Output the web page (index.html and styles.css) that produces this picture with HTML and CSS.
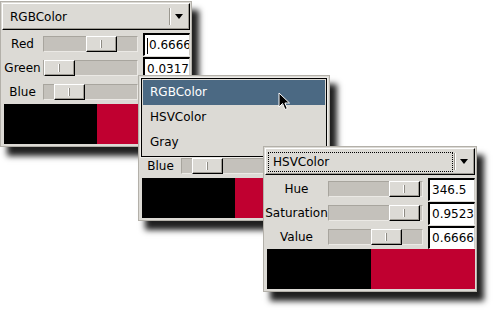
FILE: index.html
```html
<!DOCTYPE html>
<html lang="en">
<head>
    <meta charset="UTF-8">
    <title>Color Chooser</title>
    <link rel="stylesheet" href="styles.css">
</head>
<body>
    <div class="desk">
        <!-- RGB chooser, back -->
        <section class="win win-rgb">
            <div class="combo">
                <span class="combo-text">RGBColor</span>
                <span class="combo-btn"><i class="arrow"></i></span>
            </div>
            <div class="rows">
                <span class="label">Red</span>
                <div class="trough"><span class="thumb" style="left: 42px"></span></div>
                <div class="field"><span class="caret"></span>0.6666</div>

                <span class="label">Green</span>
                <div class="trough"><span class="thumb" style="left: 0px"></span></div>
                <div class="field">0.0317</div>

                <span class="label">Blue</span>
                <div class="trough"><span class="thumb" style="left: 10px"></span></div>
                <div class="field covered">0.1712</div>
            </div>
            <div class="swatch"><span class="swatch-old"></span><span class="swatch-new"></span></div>
        </section>

        <!-- same chooser with its mode menu open -->
        <section class="win win-menu">
            <div class="combo covered">
                <span class="combo-text">RGBColor</span>
                <span class="combo-btn"><i class="arrow"></i></span>
            </div>
            <div class="rows">
                <span class="label covered">Red</span>
                <div class="trough covered"><span class="thumb" style="left: 42px"></span></div>
                <div class="field covered">0.6666</div>

                <span class="label covered">Green</span>
                <div class="trough covered"><span class="thumb" style="left: 0px"></span></div>
                <div class="field covered">0.0317</div>

                <span class="label">Blue</span>
                <div class="trough"><span class="thumb" style="left: 10px"></span></div>
                <div class="field covered">0.1712</div>
            </div>
            <div class="swatch"><span class="swatch-old"></span><span class="swatch-new"></span></div>

            <ul class="menu">
                <li class="menu-item active">RGBColor</li>
                <li class="menu-item">HSVColor</li>
                <li class="menu-item">Gray</li>
            </ul>
        </section>

        <!-- HSV chooser, front -->
        <section class="win win-hsv">
            <div class="combo">
                <span class="combo-text">HSVColor</span>
                <span class="combo-btn"><i class="arrow"></i></span>
            </div>
            <div class="rows">
                <span class="label">Hue</span>
                <div class="trough"><span class="thumb" style="left: 60px"></span></div>
                <div class="field">346.5</div>

                <span class="label">Saturation</span>
                <div class="trough"><span class="thumb" style="left: 60px"></span></div>
                <div class="field">0.9523</div>

                <span class="label">Value</span>
                <div class="trough"><span class="thumb" style="left: 42px"></span></div>
                <div class="field">0.6666</div>
            </div>
            <div class="swatch"><span class="swatch-old"></span><span class="swatch-new"></span></div>
        </section>

        <svg class="pointer" width="13" height="19" viewBox="0 0 13 19">
            <path d="M1 1 L1 15 L4.5 11.5 L7 17.5 L9.3 16.5 L6.9 11 L11.5 11 Z" fill="#000" stroke="#fff" stroke-width="1"/>
        </svg>
    </div>
</body>
</html>
```

FILE: styles.css
```css
* {
    margin: 0;
    padding: 0;
    box-sizing: border-box;
}

body {
    background: #fff;
    font-family: "DejaVu Sans", Verdana, sans-serif;
    font-size: 12px;
    color: #000;
}

.desk {
    position: relative;
    width: 497px;
    height: 312px;
    overflow: hidden;
}

/* windows */
.win {
    position: absolute;
    display: flex;
    flex-direction: column;
    padding: 1px 1px 2px;
    background: #dcdad5;
    border: 1px solid #b3b0a9;
    box-shadow: 7px 9px 6px rgba(0, 0, 0, 0.88);
}

.win-rgb {
    left: 0;
    top: 1px;
    width: 192px;
}

.win-menu {
    left: 138px;
    top: 75px;
    width: 192px;
}

.win-hsv {
    left: 263px;
    top: 146px;
    width: 214px;
}

/* parts hidden under another window or the open menu */
.covered {
    visibility: hidden;
}

/* combo box */
.combo {
    display: flex;
    height: 27px;
    border: 1px solid;
    border-color: #fff #000 #000 #fff;
    box-shadow: inset -1px -1px #9d9a93;
}

.combo-text {
    flex: 1;
    display: flex;
    align-items: center;
    padding-left: 7px;
}

.win-hsv .combo-text {
    margin: 3px 1px 2px 2px;
    padding-left: 4px;
    border: 1px dotted #000;
}

.combo-btn {
    width: 19px;
    margin: 4px 1px 4px 0;
    display: flex;
    align-items: center;
    justify-content: center;
    border-left: 1px solid #9a978f;
    box-shadow: inset 1px 0 #fff;
}

.arrow {
    border-left: 4px solid transparent;
    border-right: 4px solid transparent;
    border-top: 5px solid #000;
}

/* slider rows */
.rows {
    display: grid;
    grid-template-columns: 41px 95px 52px;
    grid-auto-rows: 24px;
    align-items: start;
    margin-top: 2px;
}

.win-hsv .rows {
    grid-template-columns: 63px 95px 52px;
}

.label {
    text-align: center;
    line-height: 24px;
    white-space: nowrap;
}

.trough {
    position: relative;
    margin-top: 4px;
    height: 16px;
    background: #c4c1bb;
    border: 1px solid;
    border-color: #a8a59e #ebe9e5 #ebe9e5 #a8a59e;
}

.thumb {
    position: absolute;
    top: -1px;
    width: 31px;
    height: 16px;
    background: #dcdad5;
    border: 1px solid;
    border-color: #fff #000 #000 #fff;
    box-shadow: inset -1px -1px #9d9a93;
}

.thumb::after {
    content: "";
    position: absolute;
    left: 14px;
    top: 3px;
    width: 1px;
    height: 8px;
    background: #8e8b84;
    box-shadow: -1px 0 #fff;
}

.field {
    justify-self: end;
    width: 47px;
    height: 23px;
    margin-top: 1px;
    padding-left: 2px;
    background: #fff;
    border-style: solid;
    border-width: 2px 1px 1px 2px;
    border-color: #000 #d0cdc7 #fff #000;
    line-height: 20px;
    white-space: nowrap;
    overflow: hidden;
}

.caret {
    display: inline-block;
    width: 1px;
    height: 16px;
    margin-right: 1px;
    background: #000;
    vertical-align: middle;
}

/* old / new colour */
.swatch {
    display: flex;
    height: 40px;
    margin-left: 2px;
}

.swatch span {
    flex: 1;
}

.swatch-old {
    background: #000;
}

.swatch-new {
    background: #c00030;
}

/* open popup menu */
.menu {
    position: absolute;
    left: 2px;
    top: 2px;
    width: 186px;
    padding: 1px;
    list-style: none;
    background: #dcdad5;
    border: 1px solid #000;
    box-shadow: 0 0 0 1px #eeece8;
}

.menu-item {
    height: 25px;
    line-height: 25px;
    padding-left: 7px;
}

.menu-item.active {
    background: #4b6983;
    color: #fff;
}

.pointer {
    position: absolute;
    left: 278px;
    top: 92px;
}
```
